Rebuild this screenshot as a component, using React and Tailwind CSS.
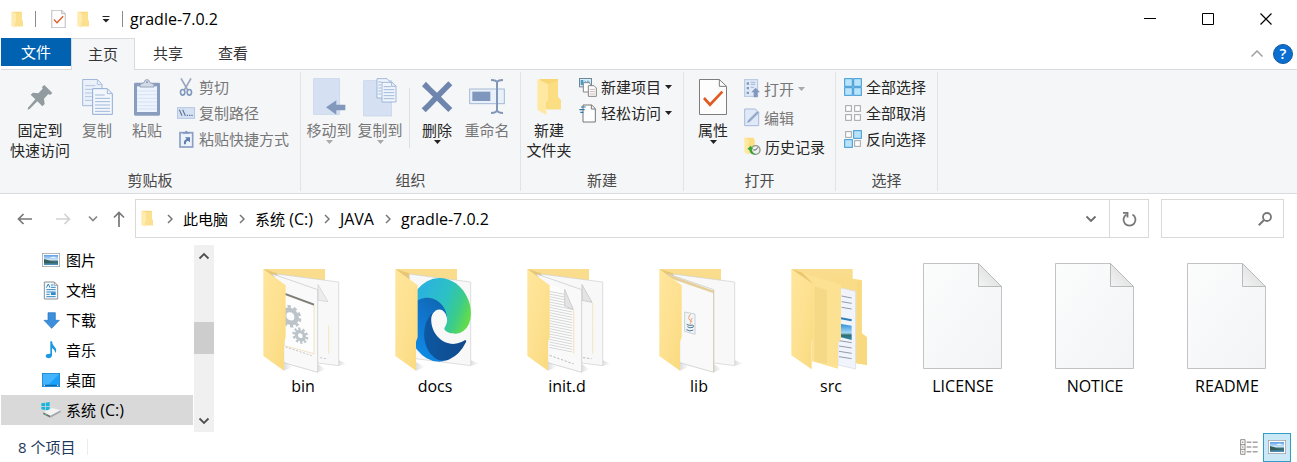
import React from "react";

/* ---------- shared icon pieces ---------- */

function Svg({ w, h, box, className = "", children }) {
  return (
    <svg width={w} height={h} viewBox={box} fill="none" aria-hidden="true" className={"shrink-0 " + className}>
      {children}
    </svg>
  );
}

function SmallFolder({ w = 13, h = 17 }) {
  return (
    <Svg w={w} h={h} box="0 0 39 51">
      <path d="M3 2H33V28L36 31V46H14L3 44Z" fill="#f9da80" />
      <path d="M15 8L33 4V28L36 31V46H15Z" fill="#fbe08f" />
      <path d="M1 2L15 7V32L13 35V50L1 45Z" fill="#ffeab0" />
    </Svg>
  );
}

function CheckPage({ w, h }) {
  return (
    <Svg w={w} h={h} box="0 0 84 108">
      <path d="M1.5 1.5H61L82.500 22V106.500H1.500Z" fill="#fdfdfd" stroke="#7d7d7d" strokeWidth="3" />
      <path d="M61 1.500V22H82.500" stroke="#7d7d7d" strokeWidth="3" />
      <path d="M15 57L33 77L70 38" stroke="#e05a23" strokeWidth="8" />
    </Svg>
  );
}

function Caret({ color = "#222" }) {
  return (
    <Svg w={7} h={4} box="0 0 7 4">
      <path d="M0 0H7L3.500 4Z" fill={color} />
    </Svg>
  );
}

function Chevron({ color = "#6b6b6b", turn = "" }) {
  return (
    <Svg w={12} h={12} box="0 0 12 12" className={turn}>
      <path d="M1.500 3.500L6 8L10.500 3.500" stroke={color} strokeWidth="1.800" />
    </Svg>
  );
}

function Crumb() {
  return (
    <Svg w={6} h={10} box="0 0 6 10">
      <path d="M1 1L5 5L1 9" stroke="#777" strokeWidth="1.500" />
    </Svg>
  );
}

/* ---------- large ribbon icons ---------- */

const PinIcon = () => (
  <Svg w={26} h={26} box="0 0 78 78">
    <path d="M52 3L76 27L69 33L64 30L51 44L53 60L46 67L31 52L8 75L2 77L3 71L25 46L11 32L18 26L34 28L47 14L45 9Z" fill="#929b9f" />
  </Svg>
);

const CopyIcon = () => (
  <Svg w={31} h={36} box="0 0 93 108">
    <path d="M2 1.500H46L60 16V80H2Z" fill="#eaf1fb" stroke="#a3b8d8" strokeWidth="3" />
    <path d="M46 2V17H60M9 20H40M9 31H52M9 42H52M9 53H52M9 64H52" stroke="#b3c5e0" strokeWidth="3" />
    <path d="M32 29H76L91 44V106H32Z" fill="#f2f7fe" stroke="#93abd0" strokeWidth="3" />
    <path d="M76 29V44H91M39 48H68M39 58H84M39 68H84M39 78H84M39 88H84M39 97H84" stroke="#a3b8d8" strokeWidth="3" />
  </Svg>
);

const PasteIcon = () => (
  <Svg w={26} h={37} box="0 0 78 111">
    <rect x="0" y="11" width="78" height="99" rx="4" fill="#8a9dbf" />
    <rect x="9" y="22" width="60" height="77" fill="#edf4fd" />
    <path d="M9 36H69M9 47H69M9 58H69M9 69H69M9 80H69M9 90H69" stroke="#cfddf0" strokeWidth="2.500" />
    <path d="M18 24V16Q26 14 31 10Q31 2 39 2T47 10Q52 14 60 16V24Z" fill="#d3dbe6" stroke="#94a3bb" strokeWidth="3" />
    <circle cx="39" cy="10" r="3" fill="#8496b2" />
  </Svg>
);

const MoveToIcon = () => (
  <Svg w={34} h={38} box="0 0 102 114">
    <rect x="5" y="2" width="78" height="107" fill="#d5e1f2" stroke="#c3d3ea" strokeWidth="2" />
    <path d="M100 80H73V67L42 88L73 110V97H100Z" fill="#8299bd" />
  </Svg>
);

const CopyToIcon = () => (
  <Svg w={34} h={39} box="0 0 102 117">
    <rect x="2" y="8" width="84" height="106" fill="#d5e1f2" stroke="#c3d3ea" strokeWidth="2" />
    <path d="M42 2H72L82 12V60H42Z" fill="#eff5fd" stroke="#93abd0" strokeWidth="2.500" />
    <path d="M57 13H87L99 24V72H57Z" fill="#eff5fd" stroke="#93abd0" strokeWidth="2.500" />
    <path d="M46 12H56M46 21H54M46 30H54M46 39H54M46 48H54M62 26H84M62 35H94M62 44H94M62 53H94M62 62H94M86 13V25H98" stroke="#93abd0" strokeWidth="2.500" />
  </Svg>
);

const DeleteIcon = () => (
  <Svg w={32} h={32} box="0 0 96 96">
    <path d="M15 2Q33 22 48 35Q62 22 82 1L94 13Q75 32 60 47Q76 64 94 81L82 93Q64 75 48 59Q32 76 14 94L2 82Q21 64 36 47Q20 32 3 16Z" fill="#6e86ad" />
  </Svg>
);

const RenameIcon = () => (
  <Svg w={36} h={36} box="0 0 108 108">
    <rect x="2" y="30" width="104" height="44" fill="#e9f0fa" stroke="#a5b9d7" strokeWidth="3" />
    <rect x="10" y="38" width="54" height="28" fill="#7f97bd" />
    <path d="M66 3Q82 3 84 10Q86 3 102 3M84 10V94M66 102Q82 102 84 94Q86 102 102 102" stroke="#8297b8" strokeWidth="6" />
  </Svg>
);

const NewFolderIcon = () => (
  <Svg w={24} h={38} box="0 0 72 114">
    <path d="M8 3H63V57L71 66V94H30L8 88Z" fill="#f7d673" />
    <path d="M32 18L63 8V58L71 66V94H32Z" fill="#fbdd82" />
    <path d="M1 3L33 18V66L28 74V111L1 95Z" fill="#ffe9a2" />
  </Svg>
);

/* ---------- small ribbon icons ---------- */

const CutIcon = () => (
  <Svg w={18} h={18} box="0 0 54 54">
    <path d="M12 1L32 36M42 1L22 36" stroke="#9aa9bf" strokeWidth="5" />
    <ellipse cx="17" cy="43" rx="6.500" ry="8.500" stroke="#8299bd" strokeWidth="5" />
    <ellipse cx="37" cy="43" rx="6.500" ry="8.500" stroke="#8299bd" strokeWidth="5" />
  </Svg>
);

const PathIcon = () => (
  <Svg w={18} h={18} box="0 0 54 54">
    <rect x="1.500" y="11" width="51" height="32" fill="#d5e2f4" stroke="#b4c6e1" strokeWidth="3" />
    <path d="M7 17L15 35M17 17L25 35" stroke="#5f7698" strokeWidth="3.500" />
    <path d="M29 34H33M36 34H40M43 34H47" stroke="#5f7698" strokeWidth="3.500" />
  </Svg>
);

const PasteShortcutIcon = () => (
  <Svg w={18} h={18} box="0 0 54 54">
    <rect x="9" y="8" width="38" height="43" fill="#edf3fc" stroke="#8a9fc3" strokeWidth="5" />
    <path d="M18 11V6H24Q28 -2 32 6H38V11Z" fill="#8299bd" />
    <path d="M21 43Q19 30 29 27L24 22H39V37L33 32Q25 34 27 43Z" fill="#5f7dae" />
  </Svg>
);

const NewItemIcon = () => (
  <Svg w={18} h={19} box="0 0 54 57">
    <rect x="1.500" y="1.500" width="36" height="25" fill="#d5edfb" stroke="#6f8797" strokeWidth="3" />
    <path d="M5 6H13V21H5Z" fill="#4a9ac4" />
    <path d="M17 8L22 15L27 8L33 15" stroke="#6fb2d6" strokeWidth="3" />
    <path d="M13 14H30L35 19V42H13Z" fill="#fff" stroke="#858585" strokeWidth="3" />
    <path d="M28 23H45L52 30V55H28Z" fill="#fff" stroke="#858585" strokeWidth="3" />
    <path d="M32 34H48M32 41H48M32 48H48" stroke="#c3a9a9" strokeWidth="2.500" />
  </Svg>
);

const EasyAccessIcon = () => (
  <Svg w={18} h={19} box="0 0 54 57">
    <path d="M12 3H38L49 14V54H12Z" fill="#fff" stroke="#777" strokeWidth="3" />
    <path d="M37 3V15H49" stroke="#777" strokeWidth="3" />
    <path d="M6 9H20M1 17H17M4 25H13" stroke="#2b79a8" strokeWidth="3.500" />
  </Svg>
);

const OpenIcon = () => (
  <Svg w={16} h={19} box="0 0 48 57">
    <rect x="2" y="2" width="39" height="50" fill="#dfe9f7" stroke="#b3c5e0" strokeWidth="3" />
    <path d="M8 10H15V17H8ZM8 24H15V31H8ZM8 38H15V45H8Z" fill="#8299bd" />
    <path d="M20 10H34M20 16H34M20 25H30" stroke="#a4b8d7" strokeWidth="3" />
    <path d="M35 26L48 40H41V55H29V40H22Z" fill="#8299bd" />
  </Svg>
);

const EditIcon = () => (
  <Svg w={16} h={19} box="0 0 48 57">
    <path d="M2 3H34L44 13V53H2Z" fill="#dfe9f7" stroke="#a8bbd9" strokeWidth="3" />
    <path d="M8 46L12 36L40 8L46 14L18 42Z" fill="#a8bbd9" />
    <path d="M12 42L42 12" stroke="#8299bd" strokeWidth="3" />
  </Svg>
);

const HistoryIcon = () => (
  <Svg w={17} h={19} box="0 0 51 57">
    <path d="M2 2H28L32 8V44L12 50L2 44Z" fill="#fbdd82" />
    <path d="M2 2L14 8V54L2 46Z" fill="#ffe9a2" />
    <circle cx="35" cy="39" r="13" fill="#eef1ee" stroke="#8b948b" strokeWidth="4" />
    <path d="M35 39L42 31M35 39H28" stroke="#555" strokeWidth="3" />
    <path d="M10 36L20 26L28 37H23Q24 47 35 52Q20 56 16 39Z" fill="#3aa53a" />
  </Svg>
);

function SelectIcon({ on }) {
  const cells = [[1, 1], [28, 1], [1, 28], [28, 28]];
  return (
    <Svg w={18} h={18} box="0 0 54 54">
      {cells.map(([x, y], i) =>
        on[i] ? (
          <rect key={i} x={x + 1} y={y + 1} width="23" height="23" fill="#b9e2fb" stroke="#3a97d3" strokeWidth="3" />
        ) : (
          <rect key={i} x={x + 4} y={y + 4} width="17" height="17" fill="#fff" stroke="#a3a3a3" strokeWidth="3" />
        )
      )}
    </Svg>
  );
}

/* ---------- ribbon building blocks ---------- */

function BigButton({ icon, lines, width, dim, arrow }) {
  return (
    <button type="button" className={"flex shrink-0 flex-col items-center whitespace-nowrap " + width + (dim ? " text-[#777]" : " text-[#262626]")}>
      <span className="flex h-[46px] items-center">{icon}</span>
      {lines.map((t) => (
        <span key={t} className="leading-[20px]">{t}</span>
      ))}
      {arrow && <Caret color={dim ? "#a9a9a9" : "#222"} />}
    </button>
  );
}

function SmallButton({ icon, text, dim, arrow, tall }) {
  return (
    <button type="button" className={"flex items-center gap-1 whitespace-nowrap " + (tall ? "h-[29px]" : "h-[26px]") + (dim ? " text-[#777]" : " text-[#262626]")}>
      {icon}
      <span>{text}</span>
      {arrow && <Caret color={dim ? "#a9a9a9" : "#222"} />}
    </button>
  );
}

function Group({ label, width, children }) {
  return (
    <section aria-label={label} className={"my-[2px] flex shrink-0 flex-col border-r border-[#e1e3e5] " + width}>
      <div className="flex grow items-start pt-[2px]">{children}</div>
      <div className="h-[20px] text-center leading-[18px] text-[#4a4a4a]">{label}</div>
    </section>
  );
}

function Ribbon() {
  return (
    <div className="flex h-[124px] border-b border-[#dadbdc] bg-[#f5f6f7]">
      <Group label="剪贴板" width="w-[301px]">
        <BigButton icon={<PinIcon />} lines={["固定到", "快速访问"]} width="w-[80px]" />
        <BigButton icon={<CopyIcon />} lines={["复制"]} width="w-[34px]" dim />
        <div className="w-[16px]" />
        <BigButton icon={<PasteIcon />} lines={["粘贴"]} width="w-[34px]" dim />
        <div className="flex flex-col pl-[13px]">
          <SmallButton icon={<CutIcon />} text="剪切" dim />
          <SmallButton icon={<PathIcon />} text="复制路径" dim />
          <SmallButton icon={<PasteShortcutIcon />} text="粘贴快捷方式" dim />
        </div>
      </Group>
      <Group label="组织" width="w-[220px]">
        <BigButton icon={<MoveToIcon />} lines={["移动到"]} width="w-[56px]" dim arrow />
        <BigButton icon={<CopyToIcon />} lines={["复制到"]} width="w-[46px]" dim arrow />
        <div className="mt-[14px] ml-[6px] h-[60px] w-px bg-[#dcdee0]" />
        <BigButton icon={<DeleteIcon />} lines={["删除"]} width="w-[54px]" arrow />
        <BigButton icon={<RenameIcon />} lines={["重命名"]} width="w-[46px]" dim />
      </Group>
      <Group label="新建" width="w-[163px]">
        <BigButton icon={<NewFolderIcon />} lines={["新建", "文件夹"]} width="w-[56px]" />
        <div className="flex flex-col pl-[2px]">
          <SmallButton icon={<NewItemIcon />} text="新建项目" arrow />
          <SmallButton icon={<EasyAccessIcon />} text="轻松访问" arrow />
        </div>
      </Group>
      <Group label="打开" width="w-[152px]">
        <BigButton icon={<CheckPage w={28} h={36} />} lines={["属性"]} width="w-[58px]" arrow />
        <div className="flex flex-col pl-[2px]">
          <SmallButton icon={<OpenIcon />} text="打开" dim arrow tall />
          <SmallButton icon={<EditIcon />} text="编辑" dim tall />
          <SmallButton icon={<HistoryIcon />} text="历史记录" tall />
        </div>
      </Group>
      <Group label="选择" width="w-[102px]">
        <div className="flex flex-col pl-[8px]">
          <SmallButton icon={<SelectIcon on={[1, 1, 1, 1]} />} text="全部选择" />
          <SmallButton icon={<SelectIcon on={[0, 0, 0, 0]} />} text="全部取消" />
          <SmallButton icon={<SelectIcon on={[0, 1, 1, 0]} />} text="反向选择" />
        </div>
      </Group>
    </div>
  );
}

/* ---------- title bar and tabs ---------- */

function TitleBar() {
  return (
    <header className="flex h-[38px] items-center pl-[11px] text-black">
      <SmallFolder />
      <div className="ml-[11px] h-[16px] w-px bg-[#8a8a8a]" />
      <button type="button" aria-label="属性" className="ml-[15px]"><CheckPage w={15} h={18} /></button>
      <button type="button" aria-label="新建文件夹" className="ml-[11px]"><SmallFolder /></button>
      <button type="button" aria-label="自定义快速访问工具栏" className="ml-[12px]">
        <Svg w={8} h={7} box="0 0 8 7">
          <path d="M0.500 0.500H7.500" stroke="#222" />
          <path d="M0.500 3H7.500L4 6.500Z" fill="#222" />
        </Svg>
      </button>
      <div className="ml-[12px] h-[16px] w-px bg-[#8a8a8a]" />
      <h1 className="ml-[7px] grow text-[16px]">gradle-7.0.2</h1>
      <div className="flex h-full pr-[2px]">
        <button type="button" aria-label="最小化" className="grid w-[58px] place-items-center">
          <Svg w={12} h={12} box="0 0 12 12"><path d="M0 5.500H12" stroke="#000" /></Svg>
        </button>
        <button type="button" aria-label="最大化" className="grid w-[58px] place-items-center">
          <Svg w={12} h={12} box="0 0 12 12"><path d="M0.500 0.500H11.500V11.500H0.500Z" stroke="#000" /></Svg>
        </button>
        <button type="button" aria-label="关闭" className="grid w-[58px] place-items-center">
          <Svg w={12} h={12} box="0 0 12 12"><path d="M0.500 0.500L11.500 11.500M11.500 0.500L0.500 11.500" stroke="#000" strokeWidth="1.200" /></Svg>
        </button>
      </div>
    </header>
  );
}

function Tabs() {
  return (
    <div className="flex h-[32px] pl-px text-[#333]">
      <div className="flex border-b border-[#dadbdc]">
        <button type="button" className="h-[28px] w-[70px] bg-[#0062b1] text-white">文件</button>
      </div>
      <button type="button" className="w-[64px] border border-b-0 border-[#dadbdc] bg-[#f5f6f7] pb-px">主页</button>
      <div className="flex grow items-center border-b border-[#dadbdc]">
        <button type="button" className="h-full w-[66px] pb-px">共享</button>
        <button type="button" className="h-full w-[64px] pb-px">查看</button>
        <button type="button" aria-label="最小化功能区" className="ml-auto">
          <Svg w={12} h={7} box="0 0 12 7"><path d="M0.500 6.500L6 1L11.500 6.500" stroke="#a0a0a0" strokeWidth="1.500" /></Svg>
        </button>
        <button type="button" aria-label="帮助" className="mr-1 ml-[10px] grid size-[20px] place-items-center rounded-full border border-[#1359a0] bg-[#0a6fd0] text-[15px] leading-none font-semibold text-white">?</button>
      </div>
    </div>
  );
}

/* ---------- address row ---------- */

function AddressRow() {
  return (
    <div className="flex h-[51px] items-start pt-[5px] pr-[13px] pl-[17px] text-black">
      <nav aria-label="导航" className="flex h-[39px] w-[118px] shrink-0 items-center">
        <button type="button" aria-label="后退">
          <Svg w={15} h={12} box="0 0 15 12"><path d="M15 6H1.500M6.500 1L1.500 6L6.500 11" stroke="#777" strokeWidth="1.700" /></Svg>
        </button>
        <button type="button" aria-label="前进" className="ml-[24px]">
          <Svg w={15} h={12} box="0 0 15 12"><path d="M0 6H13.500M8.500 1L13.500 6L8.500 11" stroke="#d2d2d2" strokeWidth="1.700" /></Svg>
        </button>
        <button type="button" aria-label="最近浏览的位置" className="ml-[17px]">
          <Svg w={10} h={8} box="0 0 10 8"><path d="M1 1.500L5 5.500L9 1.500" stroke="#888" strokeWidth="1.700" /></Svg>
        </button>
        <button type="button" aria-label="上移" className="ml-[15px]">
          <Svg w={12} h={16} box="0 0 12 16"><path d="M6 16V1.500M1 6.500L6 1.500L11 6.500" stroke="#777" strokeWidth="1.700" /></Svg>
        </button>
      </nav>
      <div className="flex h-[39px] min-w-0 grow items-center border border-[#d9d9d9] pl-[5px]">
        <SmallFolder />
        <ol className="flex grow items-center gap-[11px] pl-[13px] text-[16px] whitespace-nowrap">
          <li className="flex items-center gap-[10px]"><Crumb /><button type="button" className="text-[15px]">此电脑</button></li>
          <li className="flex items-center gap-[10px]"><Crumb /><button type="button"><span className="text-[15px]">系统</span> (C:)</button></li>
          <li className="flex items-center gap-[10px]"><Crumb /><button type="button">JAVA</button></li>
          <li className="flex items-center gap-[10px]"><Crumb /><button type="button">gradle-7.0.2</button></li>
        </ol>
        <button type="button" aria-label="展开地址" className="grid h-full w-[37px] place-items-center"><Chevron /></button>
        <button type="button" aria-label="刷新" className="grid h-full w-[39px] place-items-center border-l border-[#d9d9d9]">
          <Svg w={15} h={16} box="0 0 15 16">
            <path d="M4.500 3.500A6 6 0 1 0 10.500 3.500" stroke="#777" strokeWidth="1.800" />
            <path d="M1 1.800H5.500V6.500" stroke="#777" strokeWidth="1.800" />
          </Svg>
        </button>
      </div>
      <div className="ml-[12px] flex h-[39px] w-[123px] shrink-0 items-center border border-[#d9d9d9] pr-[11px]">
        <input type="text" aria-label="搜索" className="h-full w-full min-w-0 bg-transparent pl-2 outline-none" />
        <Svg w={14} h={14} box="0 0 14 14">
          <circle cx="9" cy="5" r="4" stroke="#777" strokeWidth="1.800" />
          <path d="M6 8L0.800 13.200" stroke="#777" strokeWidth="2" />
        </Svg>
      </div>
    </div>
  );
}

/* ---------- navigation pane ---------- */

function PictureIcon({ id }) {
  return (
    <Svg w={18} h={14} box="0 0 54 42">
      <defs>
        <linearGradient id={id} x1="0" y1="0" x2="0" y2="1">
          <stop offset="0" stopColor="#5e9fe6" />
          <stop offset="0.500" stopColor="#d5ecfb" />
          <stop offset="0.600" stopColor="#3c6e70" />
          <stop offset="1" stopColor="#4a90c4" />
        </linearGradient>
      </defs>
      <rect x="1" y="1" width="52" height="40" fill="#fff" stroke="#9aa1a8" strokeWidth="2.500" />
      <rect x="6" y="6" width="42" height="30" fill={"url(#" + id + ")"} />
      <path d="M6 18Q18 20 26 25T48 28V31H6Z" fill="#355f58" />
      <path d="M24 14Q34 8 44 14Z" fill="#fff" />
    </Svg>
  );
}

const DocIcon = () => (
  <Svg w={16} h={19} box="0 0 48 57">
    <path d="M4 3H34L44 13V54H4Z" fill="#f7fafc" stroke="#8c9196" strokeWidth="3" />
    <path d="M34 3V13H44" stroke="#8c9196" strokeWidth="2.500" />
    <path d="M10 20L16 9L21 20M24 12H31M24 19H38M10 26H38M10 33H38M10 40H20M10 47H38" stroke="#2d8ac9" strokeWidth="3" />
    <rect x="24" y="34" width="14" height="8" fill="#2d8ac9" />
  </Svg>
);

const DownloadIcon = () => (
  <Svg w={17} h={17} box="0 0 51 51">
    <path d="M15 2H37V25H49L26 49L3 25H15Z" fill="#3b8fdd" stroke="#2872be" strokeWidth="2" />
  </Svg>
);

const MusicIcon = () => (
  <Svg w={12} h={18} box="0 0 36 54">
    <path d="M16 1H21Q21 11 29 18Q38 27 30 37Q32 27 21 21V43Q20 52 10 52Q2 51 2 45Q3 37 16 38Z" fill="#1b98e0" />
  </Svg>
);

const DesktopIcon = () => (
  <Svg w={18} h={14} box="0 0 54 42">
    <rect x="1" y="1" width="52" height="40" fill="#1aa0fb" stroke="#0a78c8" strokeWidth="2" />
    <path d="M3 3H51L20 35H3Z" fill="#44b4ff" />
    <path d="M3 37H51" stroke="#0b5c9c" strokeWidth="3" />
    <path d="M5 37H9M45 37H49" stroke="#fff" strokeWidth="3" />
  </Svg>
);

const DriveIcon = () => (
  <Svg w={20} h={16} box="0 0 60 48">
    <path d="M1 4L12 2V12H1ZM14 2L26 0V12H14ZM1 14H12V24L1 22ZM14 14H26V26L14 24Z" fill="#1bb4dc" />
    <path d="M7 31L34 18L59 25L28 41Z" fill="#f3f3f3" />
    <path d="M7 31L28 41V47L7 37Z" fill="#6f7477" />
    <path d="M28 41L59 25V31L28 47Z" fill="#a4a8aa" />
    <path d="M12 36L17 38" stroke="#5fe07a" strokeWidth="3" />
  </Svg>
);

const places = [
  { name: "图片", icon: <PictureIcon id="nav-picture" /> },
  { name: "文档", icon: <DocIcon /> },
  { name: "下载", icon: <DownloadIcon /> },
  { name: "音乐", icon: <MusicIcon /> },
  { name: "桌面", icon: <DesktopIcon /> },
  { name: "系统", drive: "(C:)", icon: <DriveIcon />, active: true },
];

function Sidebar() {
  return (
    <aside className="flex shrink-0">
      <ul className="w-[193px] pl-px">
        {places.map((p) => (
          <li key={p.name}>
            <button type="button" className={"flex h-[30px] w-full items-center pl-[40px] text-black " + (p.active ? "bg-[#d9d9d9]" : "")}>
              <span className="flex w-[20px] justify-center">{p.icon}</span>
              <span className="pl-[5px]">
                {p.name}
                {p.drive && <span className="text-[16px]"> {p.drive}</span>}
              </span>
            </button>
          </li>
        ))}
      </ul>
      <div className="ml-px flex w-[20px] flex-col items-center bg-[#f0f0f0]">
        <button type="button" aria-label="向上滚动" className="grid h-[22px] place-items-center"><Chevron color="#505050" turn="rotate-180" /></button>
        <div className="mt-[55px] h-[32px] w-full bg-[#cdcdcd]" />
        <button type="button" aria-label="向下滚动" className="mt-auto grid h-[22px] place-items-center"><Chevron color="#505050" /></button>
      </div>
    </aside>
  );
}

/* ---------- file tiles ---------- */

function TileDefs() {
  return (
    <svg width="0" height="0" className="absolute" aria-hidden="true">
      <defs>
        <linearGradient id="cover" x1="0" y1="0" x2="1" y2="1">
          <stop offset="0" stopColor="#fee69c" />
          <stop offset="0.500" stopColor="#fee191" />
          <stop offset="1" stopColor="#f9da7e" />
        </linearGradient>
        <linearGradient id="sheet" x1="0" y1="0" x2="1" y2="1">
          <stop offset="0" stopColor="#fbfcfc" />
          <stop offset="1" stopColor="#f3f4f5" />
        </linearGradient>
        <linearGradient id="fold" x1="0" y1="1" x2="1" y2="0">
          <stop offset="0" stopColor="#f4f4f4" />
          <stop offset="1" stopColor="#d4d5d6" />
        </linearGradient>
        <linearGradient id="shade" x1="0" y1="0" x2="1" y2="0">
          <stop offset="0" stopColor="#bdbdbd" />
          <stop offset="1" stopColor="#ffffff" />
        </linearGradient>
        <linearGradient id="edge-deep" x1="63" y1="180" x2="241" y2="180" gradientUnits="userSpaceOnUse">
          <stop offset="0" stopColor="#0c59a4" />
          <stop offset="1" stopColor="#114a8b" />
        </linearGradient>
        <linearGradient id="edge-blue" x1="150" y1="90" x2="50" y2="240" gradientUnits="userSpaceOnUse">
          <stop offset="0" stopColor="#1068b4" />
          <stop offset="0.500" stopColor="#1078d4" />
          <stop offset="1" stopColor="#0f8be4" />
        </linearGradient>
        <linearGradient id="edge-green" x1="60" y1="60" x2="240" y2="150" gradientUnits="userSpaceOnUse">
          <stop offset="0" stopColor="#2bb3dc" />
          <stop offset="0.450" stopColor="#2cc1c4" />
          <stop offset="0.750" stopColor="#3bcb8c" />
          <stop offset="1" stopColor="#62dc4c" />
        </linearGradient>
        <linearGradient id="photo" x1="0" y1="0" x2="0" y2="1">
          <stop offset="0" stopColor="#2d8fdb" />
          <stop offset="0.550" stopColor="#a6d8f4" />
          <stop offset="0.700" stopColor="#2e6f73" />
          <stop offset="1" stopColor="#3187ae" />
        </linearGradient>
      </defs>
    </svg>
  );
}

const Tile = ({ children }) => <Svg w={96} h={112} box="0 0 288 336">{children}</Svg>;

const FolderBack = () => (
  <>
    <path d="M25 21H210V70L60 60Z" fill="#f9dd8c" />
    <path d="M25 21L66 34L92 72V90Z" fill="#e8c673" />
  </>
);

const FolderCover = () => (
  <>
    <path d="M87 326L114 314L87 300Z" fill="url(#shade)" opacity="0.500" />
    <path d="M25 21L92 70V226L87 239V326L25 282Z" fill="url(#cover)" />
  </>
);

const RearSheet = () => (
  <>
    <path d="M251 311L276 305L251 294Z" fill="url(#shade)" opacity="0.500" />
    <path d="M66 36L251 60V311L86 290Z" fill="#f8f8f8" stroke="#cfcfcf" strokeWidth="2" />
  </>
);

const FrontSheet = () => (
  <>
    <path d="M188 331L212 322L188 306Z" fill="url(#shade)" opacity="0.500" />
    <path d="M50 35L188 83V331L86 302V80Z" fill="#f9f9f9" stroke="#c4c4c4" strokeWidth="2" />
  </>
);

function Gear({ x, y, r, ring }) {
  return (
    <g transform={"translate(" + x + " " + y + ") skewY(12)"}>
      <circle r={r} stroke="#bcc4ca" strokeWidth={ring} />
      <circle r={r + ring / 2 + 3} stroke="#bcc4ca" strokeWidth="8" pathLength="100" strokeDasharray="5.500 4.500" />
    </g>
  );
}

const BinIcon = () => (
  <Tile>
    <FolderBack />
    <RearSheet />
    <path d="M189 68L219 119L189 115Z" fill="#ececec" stroke="#cfcfcf" strokeWidth="2" />
    <path d="M221 190V275" stroke="#f0dfa6" strokeWidth="2" />
    <FrontSheet />
    <path d="M88 98L177 130V275L88 251Z" fill="#fdfdfd" stroke="#ead9a6" strokeWidth="2" />
    <path d="M88 95L177 128" stroke="#7c7c7c" strokeWidth="6" />
    <Gear x={106} y={163} r={19} ring={14} />
    <Gear x={136} y={221} r={12} ring={10} />
    <path d="M92 255L170 281M196 287L218 291" stroke="#aaa" strokeWidth="2" strokeDasharray="6 5" />
    <FolderCover />
  </Tile>
);

const DocsIcon = () => (
  <Tile>
    <FolderBack />
    <RearSheet />
    <g transform="translate(61 48) scale(0.745 0.980) translate(-4.630 -4.920)">
      <path d="M235.680 195.460a93.730 93.730 0 0 1-10.540 4.710 101.870 101.870 0 0 1-35.900 6.460c-47.320 0-88.540-32.550-88.540-74.320A31.480 31.480 0 0 1 117.130 105c-42.800 1.800-53.800 46.400-53.800 72.530 0 73.880 68.090 81.370 82.760 81.370 7.910 0 19.840-2.300 27-4.560l1.310-.440a128.340 128.340 0 0 0 66.600-52.800 4 4 0 0 0-5.320-5.640z" fill="url(#edge-deep)" />
      <path d="M110.340 246.340A79.200 79.200 0 0 1 87.600 225a80.720 80.720 0 0 1 29.530-120c3.120-1.470 8.450-4.130 15.540-4a32.350 32.350 0 0 1 25.690 13 31.880 31.880 0 0 1 6.360 18.660c0-.210 24.460-79.600-80-79.600-43.900 0-80 41.660-80 78.210a130.150 130.150 0 0 0 12.110 56 128 128 0 0 0 156.380 67.110 75.550 75.550 0 0 1-62.780-8z" fill="url(#edge-blue)" />
      <path d="M156.940 153.780c-.810 1.050-3.300 2.500-3.300 5.660 0 2.610 1.700 5.120 4.720 7.230 14.380 10 41.490 8.680 41.560 8.680a59.560 59.560 0 0 0 30.270-8.350 61.380 61.380 0 0 0 30.430-52.880c.260-22.410-8-37.310-11.340-43.910-21.190-41.440-66.920-65.280-116.650-65.280a128 128 0 0 0-128 126.200c.480-36.540 36.800-66.050 80-66.050 3.500 0 23.460.340 42 10.070 16.340 8.580 24.900 18.940 30.850 29.210 6.180 10.670 7.280 24.150 7.280 29.520s-2.740 13.330-7.800 19.900z" fill="url(#edge-green)" />
    </g>
    <FolderCover />
  </Tile>
);

const InitIcon = () => {
  const rows = Array.from({ length: 22 }, (_, i) => 88 + i * 8);
  return (
    <Tile>
      <FolderBack />
      <RearSheet />
      <path d="M189 68L219 121L189 115Z" fill="#e4e4e4" stroke="#bdbdbd" strokeWidth="2" />
      <path d="M221 190V275M221 121V190" stroke="#f0dfa6" strokeWidth="2" />
      <FrontSheet />
      <path d="M90 66L138 84V130L163 143V277L90 255Z" fill="#fdfdfd" />
      {rows.map((y) => (
        <path key={y} d={"M91 " + y + "L" + (y < 120 ? "136 " + (y + 9) : "160 " + (y + 14))} stroke="#bfc1c3" strokeWidth="2" />
      ))}
      <path d="M137 82L163 143L137 132Z" fill="#e4e4e4" stroke="#bdbdbd" strokeWidth="2" />
      <path d="M164 145V275" stroke="#ecd591" strokeWidth="2" />
      <path d="M92 280L164 306M192 287L218 290" stroke="#999" strokeWidth="2" strokeDasharray="7 5" />
      <FolderCover />
    </Tile>
  );
};

const LibIcon = () => (
  <Tile>
    <FolderBack />
    <RearSheet />
    <FrontSheet />
    <path d="M50 36L188 86V94L62 50Z" fill="#e5cf98" />
    <path d="M188 84V330" stroke="#d5c9a4" strokeWidth="2" />
    <path d="M101 150L132 156V217L101 208Z" fill="#f1f5f8" stroke="#b3bcc4" strokeWidth="2" />
    <path d="M119 156Q108 168 117 174Q124 180 116 188M124 168Q117 174 121 180" stroke="#e8a070" strokeWidth="3" />
    <path d="M107 187Q116 193 125 189M109 194Q117 200 124 196M106 203Q117 210 127 204M125 189Q131 191 124 198" stroke="#4e7896" strokeWidth="3" />
    <FolderCover />
  </Tile>
);

const SrcIcon = () => (
  <Tile>
    <path d="M25 21H209V60L60 60Z" fill="#f9dd8c" />
    <path d="M150 42L236 54V214L252 226V309L214 303L150 290Z" fill="#fadc88" />
    <path d="M236 54V214L252 226V309L222 304V60Z" fill="#f8d97f" />
    <path d="M165 76L218 88V321L165 309Z" fill="#f1f4fa" stroke="#d5dae2" strokeWidth="2" />
    <path d="M176 102L206 108M176 119L206 124M176 136L206 141M168 236L206 242M168 252L206 258M168 268L206 274M168 284L206 290" stroke="#8f9cad" strokeWidth="3" />
    <path d="M174 169L206 175" stroke="#2d7fb8" strokeWidth="6" />
    <path d="M174 186L206 191V234L174 226Z" fill="url(#photo)" />
    <path d="M58 32L174 68V229L165 244V320L87 298V62Z" fill="#fde193" />
    <path d="M94 73L132 84V306L94 298Z" fill="#f6d987" />
    <path d="M25 21L58 32L91 66L87 72Z" fill="#e9c66f" />
    <path d="M25 21L91 66V226L86 239V322L25 280Z" fill="url(#cover)" />
  </Tile>
);

const PageIcon = () => (
  <Tile>
    <path d="M25.500 4.500H190.500L259.500 73.500V319.500H25.500Z" fill="url(#sheet)" stroke="#c2c3c4" strokeWidth="3" />
    <path d="M190.500 4.500V73.500H259.500Z" fill="url(#fold)" stroke="#b9babb" strokeWidth="3" />
  </Tile>
);

const files = [
  { name: "bin", icon: <BinIcon /> },
  { name: "docs", icon: <DocsIcon /> },
  { name: "init.d", icon: <InitIcon /> },
  { name: "lib", icon: <LibIcon /> },
  { name: "src", icon: <SrcIcon /> },
  { name: "LICENSE", icon: <PageIcon /> },
  { name: "NOTICE", icon: <PageIcon /> },
  { name: "README", icon: <PageIcon /> },
];

function FileGrid() {
  return (
    <main className="min-w-0 grow pt-[17px] pl-[23px]">
      <TileDefs />
      <ul className="flex flex-wrap">
        {files.map((f) => (
          <li key={f.name} className="w-[132px]">
            <button type="button" className="flex w-full flex-col items-center text-[16px] leading-[24px] text-black">
              {f.icon}
              <span>{f.name}</span>
            </button>
          </li>
        ))}
      </ul>
    </main>
  );
}

/* ---------- status bar ---------- */

function StatusBar() {
  return (
    <footer className="flex h-[30px] items-center pr-[6px] pl-[18px] text-[#1e395b]">
      <span>8 个项目</span>
      <div className="ml-[12px] h-[16px] w-px bg-[#ececec]" />
      <button type="button" aria-label="详细信息" className="ml-auto">
        <Svg w={18} h={16} box="0 0 54 48">
          <path d="M2 2H15V46H2ZM2 17H15M2 31H15" stroke="#7d7470" strokeWidth="2.500" />
          <path d="M7 9.500H10M7 24H10M7 38.500H10" stroke="#333" strokeWidth="3" />
          <path d="M20 9.500H34M38 9.500H53M20 24H34M38 24H53M20 38.500H34M38 38.500H53" stroke="#777" strokeWidth="3" />
        </Svg>
      </button>
      <button type="button" aria-label="大缩略图" aria-pressed="true" className="ml-[5px] grid h-[29px] w-[28px] place-items-center border border-[#2f9dc4] bg-[#cbe8f6]">
        <PictureIcon id="status-picture" />
      </button>
    </footer>
  );
}

export default function App() {
  return (
    <div className="bg-white font-['Open_Sans','Noto_Sans_CJK_SC',sans-serif] text-[15px] leading-[20px]">
      <TitleBar />
      <Tabs />
      <Ribbon />
      <AddressRow />
      <div className="flex min-h-[187px]">
        <Sidebar />
        <FileGrid />
      </div>
      <StatusBar />
    </div>
  );
}
